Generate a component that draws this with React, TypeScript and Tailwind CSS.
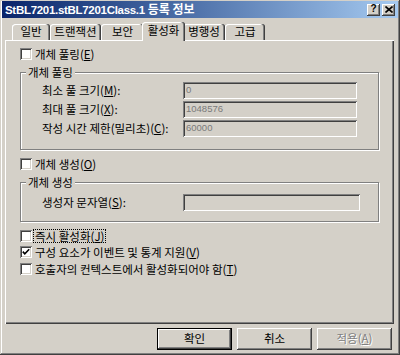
import React from "react";

const raised =
  "shadow-[inset_-1px_-1px_#404040,inset_1px_1px_#ffffff,inset_-2px_-2px_#808080,inset_2px_2px_#d4d0c8]";
const sunken =
  "shadow-[inset_1px_1px_#808080,inset_-1px_-1px_#ffffff,inset_2px_2px_#404040,inset_-2px_-2px_#d4d0c8]";

function Check({ checked }: { checked?: boolean }) {
  return (
    <span className={`w-[12px] h-[12px] bg-white shrink-0 flex items-center justify-center ${sunken}`}>
      {checked && (
        <svg width="8" height="8" viewBox="0 0 8 8">
          <polyline points="0.8,3.6 2.8,5.8 7.2,1.2" fill="none" stroke="#000" strokeWidth="1.6" />
        </svg>
      )}
    </span>
  );
}

function CheckRow({
  children,
  checked,
  focus,
  className = "",
}: {
  children: React.ReactNode;
  checked?: boolean;
  focus?: boolean;
  className?: string;
}) {
  return (
    <div className={`flex items-center h-[14px] gap-[1px] ${className}`}>
      <Check checked={checked} />
      <span
        className={`px-[1px] leading-[12px] border ${focus ? "border-dotted border-black" : "border-transparent"}`}
      >
        {children}
      </span>
    </div>
  );
}

function Field({ value, w }: { value?: string; w: string }) {
  return (
    <div
      className={`${w} h-[17px] bg-[#d4d0c8] ${sunken} flex items-center pl-[3px] text-[#7a7a7a] font-['Liberation_Sans',sans-serif] text-[9.5px]`}
    >
      {value}
    </div>
  );
}

const U = ({ c }: { c: string }) => <span className="underline underline-offset-[1px]">{c}</span>;

function Tab({ label, w, selected }: { label: string; w: string; selected?: boolean }) {
  return (
    <div
      className={`${w} relative flex items-center justify-center rounded-t-[3px] bg-[#d4d0c8] shadow-[inset_-1px_0_#404040,inset_-2px_0_#808080,inset_1px_1px_#ffffff] ${
        selected ? "h-[19px] -mx-[2px] z-10 pb-[2px]" : "h-[16px] mt-[2px]"
      }`}
    >
      {label}
    </div>
  );
}

function Btn({
  children,
  def,
  disabled,
}: {
  children: React.ReactNode;
  def?: boolean;
  disabled?: boolean;
}) {
  return (
    <div
      className={`w-[75px] h-[22px] flex items-center justify-center bg-[#d4d0c8] ${
        def ? "border border-black" : ""
      } ${raised} ${disabled ? "text-[#808080] [text-shadow:1px_1px_#ffffff]" : ""}`}
    >
      {children}
    </div>
  );
}

export default function App() {
  return (
    <div
      className={`w-[400px] h-[355px] bg-[#d4d0c8] flex flex-col pt-[1px] text-black text-[11.5px] font-['Noto_Sans_CJK_KR','Noto_Sans',sans-serif] shadow-[inset_-1px_-1px_#404040,inset_1px_1px_#d4d0c8,inset_-2px_-2px_#808080,inset_2px_2px_#ffffff]`}
    >
      {/* Title bar */}
      <div className="mx-[2px] h-[17px] bg-linear-to-r from-[#0a246a] to-[#a6caf0] flex items-center pl-[3px] pr-[3px]">
        <span className="text-white font-bold text-[11.5px] tracking-[-0.3px] font-['Liberation_Sans','Noto_Sans_CJK_KR',sans-serif] leading-none">
          StBL7201.stBL7201Class.1{" "}
          <span className="font-['Noto_Sans_CJK_KR',sans-serif] tracking-normal text-[12px] font-semibold">등록 정보</span>
        </span>
        <div className="ml-auto flex gap-[2px]">
          <div className={`w-[13px] h-[12px] bg-[#d4d0c8] ${raised} flex items-center justify-center`}>
            <span className="font-['Liberation_Sans',sans-serif] font-bold text-[10px] leading-none mt-[-1px]">?</span>
          </div>
          <div className={`w-[13px] h-[12px] bg-[#d4d0c8] ${raised} flex items-center justify-center`}>
            <svg width="8" height="7" viewBox="0 0 8 7" className="mt-[-1px]">
              <path d="M0.5 0.5 L7.5 6.5 M7.5 0.5 L0.5 6.5" stroke="#000" strokeWidth="1.6" />
            </svg>
          </div>
        </div>
      </div>

      {/* Tabs */}
      <div className="mt-[4px] ml-[12px] h-[18px] flex items-start">
        <Tab label="일반" w="w-[38px]" />
        <Tab label="트랜잭션" w="w-[51px]" />
        <Tab label="보안" w="w-[43px]" />
        <Tab label="활성화" w="w-[43px]" selected />
        <Tab label="병행성" w="w-[42px]" />
        <Tab label="고급" w="w-[40px]" />
      </div>

      {/* Panel */}
      <div className="ml-[5px] mr-[6px] h-[284px] flex flex-col pt-[7px] px-[15px] shadow-[inset_1px_1px_#ffffff,inset_-1px_-1px_#404040,inset_-2px_-2px_#808080]">
        <CheckRow>
          개체 풀링(<U c="E" />)
        </CheckRow>

        <div className="relative mt-[11px] border border-[#808080] shadow-[1px_1px_0_#ffffff,inset_1px_1px_0_#ffffff] pt-[9px] pl-[21px] pb-[12px] flex flex-col gap-[2px]">
          <span className="absolute -top-[8px] left-[5px] bg-[#d4d0c8] px-[2px] leading-[14px]">개체 풀링</span>
          <div className="flex items-center h-[17px]">
            <span className="w-[141px]">
              최소 풀 크기(<U c="M" />):
            </span>
            <Field value="0" w="w-[174px]" />
          </div>
          <div className="flex items-center h-[17px]">
            <span className="w-[141px]">
              최대 풀 크기(<U c="X" />):
            </span>
            <Field value="1048576" w="w-[174px]" />
          </div>
          <div className="flex items-center h-[17px]">
            <span className="w-[141px]">
              작성 시간 제한(밀리초)(<U c="C" />):
            </span>
            <Field value="60000" w="w-[174px]" />
          </div>
        </div>

        <CheckRow className="mt-[7px]">
          개체 생성(<U c="O" />)
        </CheckRow>

        <div className="relative mt-[11px] border border-[#808080] shadow-[1px_1px_0_#ffffff,inset_1px_1px_0_#ffffff] pt-[11px] pl-[21px] pb-[10px]">
          <span className="absolute -top-[8px] left-[5px] bg-[#d4d0c8] px-[2px] leading-[14px]">개체 생성</span>
          <div className="flex items-center h-[17px]">
            <span className="w-[141px]">
              생성자 문자열(<U c="S" />):
            </span>
            <Field w="w-[177px]" />
          </div>
        </div>

        <CheckRow className="mt-[7px]" focus>
          즉시 활성화(<U c="J" />)
        </CheckRow>
        <CheckRow className="mt-[2px]" checked>
          구성 요소가 이벤트 및 통계 지원(<U c="V" />)
        </CheckRow>
        <CheckRow className="mt-[3px]">
          호출자의 컨텍스트에서 활성화되어야 함(<U c="T" />)
        </CheckRow>
      </div>

      {/* Buttons */}
      <div className="mt-[4px] mr-[8px] flex justify-end gap-[5px]">
        <Btn def>확인</Btn>
        <Btn>취소</Btn>
        <Btn disabled>
          적용(<U c="A" />)
        </Btn>
      </div>
    </div>
  );
}
